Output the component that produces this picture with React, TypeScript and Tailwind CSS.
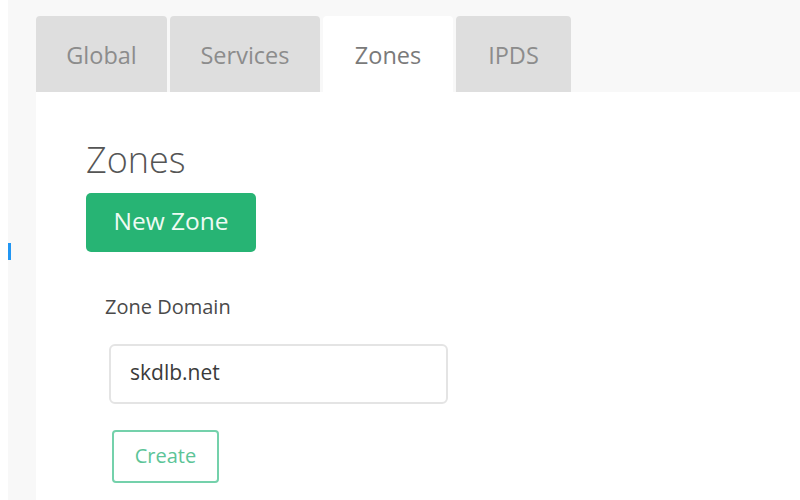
const font = { fontFamily: '"Open Sans", "Noto Sans", sans-serif' };

const tabs = [
  { label: 'Global', w: 'w-[131px]' },
  { label: 'Services', w: 'w-[150px]' },
  { label: 'Zones', w: 'w-[130px]', active: true },
  { label: 'IPDS', w: 'w-[115px]' },
];

export default function App() {
  return (
    <div className="flex h-[500px] w-[800px] overflow-hidden bg-[#f8f8f8]" style={font}>
      <div className="w-2 shrink-0 bg-white" />
      <div className="w-[28px] shrink-0 pt-[243px]">
        <div className="h-[17px] w-[3px] bg-[#2196f3]" />
      </div>
      <div className="flex flex-1 flex-col pt-4">
        <div className="flex h-[76px] gap-[3px]">
          {tabs.map((t) => (
            <div
              key={t.label}
              className={`${t.w} flex items-center justify-center rounded-t-[4px] pt-[4px] text-[23.5px] ${
                t.active ? 'bg-white text-[#7a7a7a]' : 'bg-[#dedede] text-[#8c8c8c]'
              }`}
            >
              {t.label}
            </div>
          ))}
        </div>
        <div className="flex-1 bg-white pl-[50px] pt-[46px]">
          <h1 className="h-[44px] text-[36px] font-light leading-[44px] text-[#555]">Zones</h1>
          <button className="mt-[11px] flex h-[59px] w-[170px] items-center justify-center rounded-[5px] bg-[#27b474] pb-[2px] text-[24.5px] text-[#eefaf3]">
            New Zone
          </button>
          <div className="ml-[19px] mt-[42px] h-[26px] text-[20px] font-medium leading-[26px] text-[#4a4a4a]">
            Zone Domain
          </div>
          <div className="ml-[23px] mt-[24px] flex h-[60px] w-[339px] items-center rounded-[6px] border-2 border-[#e4e4e4] pl-[19px] pb-[2px] text-[21px] text-[#3a3a3a]">
            skdlb.net
          </div>
          <button className="ml-[26px] mt-[26px] flex h-[53px] w-[107px] items-center justify-center rounded-[4px] border-2 border-[#74d1ab] pb-[2px] text-[20px] text-[#5cc497]">
            Create
          </button>
        </div>
      </div>
    </div>
  );
}
